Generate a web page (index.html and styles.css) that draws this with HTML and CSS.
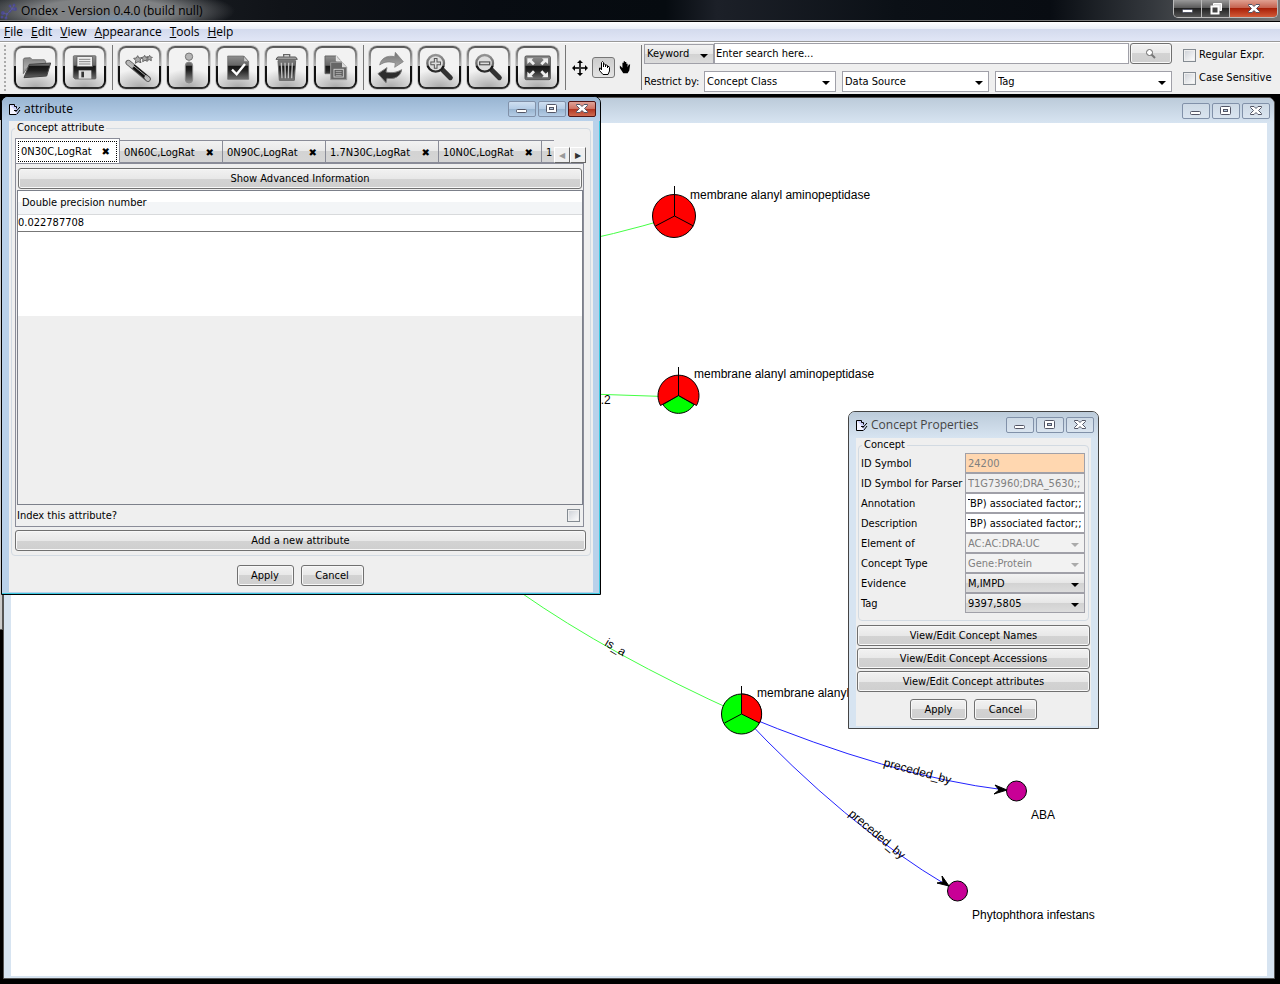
FILE: index.html
```html
<!DOCTYPE html>
<html lang="en">
<head>
<meta charset="utf-8">
<title>Ondex - Version 0.4.0 (build null)</title>
<link rel="stylesheet" href="styles.css">
</head>
<body>
<svg class="defs" aria-hidden="true">
  <defs>
    <linearGradient id="metal" gradientUnits="userSpaceOnUse" x1="0" y1="25" x2="0" y2="110">
      <stop offset="0" stop-color="#9a9a9a"/><stop offset=".42" stop-color="#666"/>
      <stop offset=".46" stop-color="#161616"/><stop offset=".6" stop-color="#222"/><stop offset="1" stop-color="#888"/>
    </linearGradient>
    <linearGradient id="pale" gradientUnits="userSpaceOnUse" x1="0" y1="25" x2="0" y2="110">
      <stop offset="0" stop-color="#777"/><stop offset=".5" stop-color="#aaa"/><stop offset="1" stop-color="#666"/>
    </linearGradient>
    <symbol id="min" viewBox="0 0 14 12"><rect x="1.5" y="6.5" width="10" height="3" rx="1" fill="#fff" stroke="#535666"/></symbol>
    <symbol id="max" viewBox="0 0 14 12"><rect x="1.5" y="1.5" width="10" height="8" rx="1" fill="#fff" stroke="#535666"/><rect x="4.500" y="4.500" width="4" height="2" fill="#b8cce0" stroke="#535666"/></symbol>
    <symbol id="cross" viewBox="0 0 14 12"><path d="M1.500 1.500h3.500l2 2 2-2h3.500v1l-3 3 3 3v1h-3.500l-2-2-2 2h-3.500v-1l3-3-3-3z" fill="#fff" stroke="#535666"/></symbol>
    <symbol id="page" viewBox="0 0 14 14"><path d="M1.500 2.500h5l3 2v8h-8z" fill="#cdd0fa"/><path d="M2 3l6 6v3H2z" fill="#f4f4ff"/><path d="M8.500 12.500h-7v-10h5v2h2v2" fill="none" stroke="#000"/><path d="M6 8.500h3M7.500 10l4.500-5M9 12l3-4" stroke="#000" fill="none"/></symbol>
  </defs>
</svg>

<header class="titlebar">
  <svg class="logo" viewBox="0 0 18 20"><g fill="#4b4a90"><circle cx="3" cy="12" r="2"/><circle cx="6" cy="17" r="1.500"/><circle cx="2" cy="16" r="1.500"/><circle cx="7" cy="13" r="1.500"/><circle cx="10" cy="10" r="1.500"/><circle cx="10" cy="5" r="1.500"/><circle cx="14" cy="4" r="1.500"/><circle cx="15" cy="8" r="2"/><circle cx="12" cy="8" r="1.500"/></g><path d="M3 12l4 1 5-5 2-4M6 17l1-4M10 5l2 3h3" stroke="#6664a8" stroke-opacity=".5" fill="none"/></svg>
  <h1>Ondex - Version 0.4.0 (build null)</h1>
  <div class="app-controls">
    <button aria-label="Minimize"><svg class="ctl"><use href="#min"/></svg></button>
    <button aria-label="Restore"><svg class="ctl" viewBox="0 0 14 12"><path d="M4.500 2.500v-2h8v7h-2" fill="#ddd" stroke="#fff"/><rect x="2.500" y="3.500" width="7" height="7" fill="#444" stroke="#fff" stroke-width="2"/></svg></button>
    <button class="close" aria-label="Close"><svg class="ctl"><use href="#cross"/></svg></button>
  </div>
</header>

<nav class="menubar">
  <button><u>F</u>ile</button><button><u>E</u>dit</button><button><u>V</u>iew</button><button><u>A</u>ppearance</button><button><u>T</u>ools</button><button><u>H</u>elp</button>
</nav>

<section class="toolbar">
  <span class="grip"></span>
  <div class="tools">
    <button class="tool" aria-label="Open"><svg viewBox="9 9 117 117"><path d="M31 86V43l3-4 18-1 6 6h36l4 5v10H50z" fill="url(#pale)" stroke="#555" stroke-width="2"/><path d="M49 58l64-4-12 39-68 5z" fill="url(#metal)" stroke="#444" stroke-width="3"/></svg></button>
    <button class="tool" aria-label="Save"><svg viewBox="9 9 117 117"><path d="M34 35q0-3 3-3h62q3 0 3 3v64q0 3-3 3H39l-5-5z" fill="url(#metal)" stroke="#555" stroke-width="2"/><rect x="45" y="35" width="46" height="30" fill="#eee" stroke="#555" stroke-width="2"/><path d="M51 43h34M51 50h34M51 57h34" stroke="#888" stroke-width="3"/><path d="M50 76h38v25H50z" fill="#ddd"/><path d="M58 80h8v17h-8z" fill="#333"/></svg></button>
    <span class="sep"></span>
    <button class="tool" aria-label="Wizard"><svg viewBox="9 9 117 117"><path d="M34 53l59 49" stroke="#555" stroke-width="17" stroke-linecap="round"/><path d="M53 67l39 33" stroke="#111" stroke-width="13" stroke-linecap="round"/><path d="M34 53l11 9M88 97l5 5" stroke="#bbb" stroke-width="12" stroke-linecap="round"/><path d="M36 51l57 47" stroke="#aaa" stroke-width="3"/><path d="M62 32l4 7 9-1-6 7 3 8-9-3-8 5 1-9-6-6 8-1zM83 31l3 6 8-1-5 6 2 7-7-3-7 4 1-8-6-4 8-2zM98 31l2 5 6 1-4 4 1 6-6-3-5 2 1-6-4-4 6-1z" fill="#aaa" stroke="#666" stroke-width="3"/></svg></button>
    <button class="tool" aria-label="Information"><svg viewBox="9 9 117 117"><circle cx="69" cy="35" r="11" fill="#b5b5b5" stroke="#777" stroke-width="3"/><rect x="58" y="51" width="22" height="63" rx="11" fill="url(#metal)" stroke="#888" stroke-width="3"/></svg></button>
    <button class="tool" aria-label="Validate"><svg viewBox="9 9 117 117"><path d="M38 33h48l15 17v53H38z" fill="url(#metal)" stroke="#666" stroke-width="2"/><path d="M86 33v17h15z" fill="#ccc" stroke="#666" stroke-width="2"/><path d="M51 74l14 14 25-31" fill="none" stroke="#fff" stroke-width="7"/></svg></button>
    <button class="tool" aria-label="Delete"><svg viewBox="9 9 117 117"><path d="M59 35v-6h18v6" fill="none" stroke="#666" stroke-width="4"/><path d="M36 43l5-7h54l5 7z" fill="#aaa" stroke="#555" stroke-width="3"/><path d="M42 47h53l-4 59H46z" fill="url(#metal)" stroke="#666" stroke-width="3"/><path d="M52 53l2 47M63 53l1 47M74 53l-1 47M85 53l-2 47" stroke="#c4c4c4" stroke-width="4"/></svg></button>
    <button class="tool" aria-label="Copy"><svg viewBox="9 9 117 117"><path d="M36 33h34l14 15v38H36z" fill="url(#metal)" stroke="#666" stroke-width="3"/><path d="M70 33v15h14" fill="#ddd" stroke="#eee" stroke-width="3"/><path d="M53 52h34l14 15v37H53z" fill="#666" stroke="#999" stroke-width="3"/><path d="M87 52v15h14z" fill="#ddd"/><rect x="63" y="73" width="28" height="23" fill="#555" stroke="#ccc" stroke-width="3"/><path d="M68 79h18M68 85h18M68 91h18" stroke="#ddd" stroke-width="2"/></svg></button>
    <span class="sep"></span>
    <button class="tool" aria-label="Refresh"><svg viewBox="9 9 117 117"><path d="M35 60C39 39 58 30 80 35l2-13 24 28-26 17 2-13C64 49 51 49 35 60z" fill="url(#pale)" stroke="#777" stroke-width="2"/><path d="M101 74C97 96 79 103 57 100l-3 13-24-27 27-18-3 13c17 4 32 2 47-7z" fill="#2c2c2c" stroke="#777" stroke-width="3"/></svg></button>
    <button class="tool" aria-label="Zoom in"><svg viewBox="9 9 117 117"><path d="M74 72l26 26" stroke="#333" stroke-width="15" stroke-linecap="round"/><circle cx="56" cy="55" r="25" fill="#ddd" stroke="url(#metal)" stroke-width="7"/><path d="M56 39v32M40 55h32" stroke="#555" stroke-width="11"/><path d="M56 42v26M43 55h26" stroke="#ddd" stroke-width="5"/></svg></button>
    <button class="tool" aria-label="Zoom out"><svg viewBox="9 9 117 117"><path d="M74 72l26 26" stroke="#333" stroke-width="15" stroke-linecap="round"/><circle cx="56" cy="55" r="25" fill="#ddd" stroke="url(#metal)" stroke-width="7"/><path d="M39 55h34" stroke="#555" stroke-width="12"/><path d="M43 55h26" stroke="#ddd" stroke-width="5"/></svg></button>
    <button class="tool" aria-label="Fit to window"><svg viewBox="9 9 117 117"><rect x="30" y="33" width="76" height="71" rx="4" fill="url(#metal)" stroke="#555" stroke-width="3"/><g fill="#eee"><path d="M37 40h18l-5 5 10 10-6 6-10-10-7 6z"/><path d="M99 40H81l5 5-10 10 6 6 10-10 7 6z"/><path d="M37 97h18l-5-5 10-10-6-6-10 10-7-6z"/><path d="M99 97H81l5-5-10-10 6-6 10 10 7-6z"/></g></svg></button>
    <span class="sep"></span>
  </div>
  <div class="modes">
    <button aria-label="Move"><svg width="16" height="16" viewBox="0 0 16 16"><path d="M8 2v12M2 8h12" stroke="#333" stroke-width="2"/><path d="M8 0l3 3H5zM8 16l3-3H5zM0 8l3-3v6zM16 8l-3-3v6z"/></svg></button>
    <button class="pressed" aria-label="Pick"><svg width="16" height="16" viewBox="0 0 16 16"><path d="M5.500 10V2.500q1-2 2 0V7 4.500q1.500-1 2 0V7 5.500q1.500-1 2 0V8 6.500q2-.500 2 1V11l-1.500 3.500h-5L3.500 10.500V8q1-1 2 2z" fill="#fff" stroke="#000"/></svg></button>
    <button aria-label="Grab"><svg width="12" height="14" viewBox="1 1 14 16"><path d="M5 9V3h1.500v3V1H8v5V2h1.500v5V4H11v4l1.500-3H14l-1 7-2 3H6L2 9V6z"/></svg></button>
  </div>
  <span class="sep"></span>
  <form class="search">
    <div class="row">
      <span class="pick raised keyword"><select aria-label="Search type"><option>Keyword</option></select></span>
      <input class="query" type="text" aria-label="Search" value="Enter search here...">
      <button type="button" class="btn find" aria-label="Find"><svg width="12" height="12" viewBox="0 0 12 12"><path d="M6 6l4 4" stroke="#777" stroke-width="2"/><circle cx="4.500" cy="4.500" r="3" fill="#fff" stroke="#666"/></svg></button>
    </div>
    <div class="row lower">
      <label for="cls">Restrict by:</label>
      <span class="pick cls"><select id="cls"><option>Concept Class</option></select></span>
      <span class="pick source"><select aria-label="Data source"><option>Data Source</option></select></span>
      <span class="pick tag"><select aria-label="Tag"><option>Tag</option></select></span>
    </div>
  </form>
  <div class="options">
    <label><input type="checkbox">Regular Expr.</label>
    <label><input type="checkbox">Case Sensitive</label>
  </div>
</section>

<main class="desktop">
  <div class="edge-panel"></div>
  <section class="window graph" aria-label="Graph">
    <div class="caption">
      <div class="controls"><button aria-label="Minimize"><svg class="ctl"><use href="#min"/></svg></button><button aria-label="Maximize"><svg class="ctl"><use href="#max"/></svg></button><button aria-label="Close"><svg class="ctl"><use href="#cross"/></svg></button></div>
    </div>
    <svg class="canvas">
      <g transform="translate(-11 -123)">
        <g fill="none" stroke="#4f4"><path d="M560 245Q610 236 674 217"/><path d="M560 393L679 397"/><path d="M520 592Q610 655 741 714"/></g>
        <g fill="none" stroke="#22f"><path d="M741 714Q890 776 1005 790"/><path d="M741 714Q845 825 948 886"/></g>
        <path d="M1007 790l-12-5 4 5-5 4zM949 886l-7-10 1 6-6 1z" stroke="#000"/>
        <g stroke="#000">
          <circle cx="674" cy="216" r="21.500" fill="red"/><path d="M674.500 186v30l-19 10M674.500 216l19 10" fill="none"/>
          <path d="M663 404.500a18 18 0 0 0 31 0L678.500 395.500z" fill="lime"/><path d="M678.500 395.500L660.500 405.500A20.500 20.500 0 1 1 696.500 405.500z" fill="red"/><path d="M678.500 367v29" fill="none"/>
          <circle cx="741.500" cy="714" r="20" fill="lime"/><path d="M741.500 714V694A20 20 0 0 1 759.500 723z" fill="red"/><path d="M741.500 686v28l-17 9" fill="none"/>
          <circle cx="1016.500" cy="791" r="10" fill="#c80096"/><circle cx="957.500" cy="891" r="10" fill="#c80096"/>
        </g>
        <g class="node-text">
          <text x="690" y="199">membrane alanyl aminopeptidase</text>
          <text x="694" y="378">membrane alanyl aminopeptidase</text>
          <text x="757" y="697">membrane alanyl aminopeptidase</text>
          <text x="1031" y="819">ABA</text>
          <text x="972" y="919">Phytophthora infestans</text>
          <text x="594" y="404">0.2</text>
          <text transform="translate(604 645) rotate(31)">is_a</text>
          <text transform="translate(883 766) rotate(15)">preceded_by</text>
          <text transform="translate(848 815) rotate(40)">preceded_by</text>
        </g>
      </g>
    </svg>
  </section>

  <section class="window attribute active">
    <div class="caption"><svg class="ico"><use href="#page"/></svg><h2>attribute</h2>
      <div class="controls"><button aria-label="Minimize"><svg class="ctl"><use href="#min"/></svg></button><button aria-label="Maximize"><svg class="ctl"><use href="#max"/></svg></button><button class="close" aria-label="Close"><svg class="ctl"><use href="#cross"/></svg></button></div>
    </div>
    <div class="body">
      <fieldset>
        <legend>Concept attribute</legend>
        <div class="tabs">
          <div class="strip">
            <button class="tab current"><span>0N30C,LogRat<b>✖</b></span></button>
            <button class="tab">0N60C,LogRat<b>✖</b></button>
            <button class="tab">0N90C,LogRat<b>✖</b></button>
            <button class="tab wide">1.7N30C,LogRat<b>✖</b></button>
            <button class="tab">10N0C,LogRat<b>✖</b></button>
            <button class="tab partial">1</button>
          </div>
          <button class="scroll" aria-label="Previous tab" disabled>◀</button><button class="scroll" aria-label="Next tab">▶</button>
        </div>
        <div class="panel">
          <button class="btn">Show Advanced Information</button>
          <div class="sheet">
            <table><thead><tr><th>Double precision number</th></tr></thead><tbody><tr><td>0.022787708</td></tr></tbody></table>
            <div class="blank"></div>
          </div>
          <label class="index">Index this attribute?<input type="checkbox"></label>
        </div>
        <button class="btn">Add a new attribute</button>
      </fieldset>
      <div class="actions"><button class="btn">Apply</button><button class="btn">Cancel</button></div>
    </div>
  </section>

  <section class="window properties">
    <div class="caption"><svg class="ico"><use href="#page"/></svg><h2>Concept Properties</h2>
      <div class="controls"><button aria-label="Minimize"><svg class="ctl"><use href="#min"/></svg></button><button aria-label="Maximize"><svg class="ctl"><use href="#max"/></svg></button><button aria-label="Close"><svg class="ctl"><use href="#cross"/></svg></button></div>
    </div>
    <div class="body">
      <fieldset>
        <legend>Concept</legend>
        <div class="form">
          <label for="f1">ID Symbol</label><input id="f1" class="peach" type="text" value="24200" disabled>
          <label for="f2">ID Symbol for Parser</label><input id="f2" type="text" value="T1G73960;DRA_5630;;" disabled>
          <label for="f3">Annotation</label><input id="f3" class="scrolled" type="text" value="TBP) associated factor;;">
          <label for="f4">Description</label><input id="f4" class="scrolled" type="text" value="TBP) associated factor;;">
          <label for="f5">Element of</label><span class="pick off"><select id="f5" disabled><option>AC:AC:DRA:UC</option></select></span>
          <label for="f6">Concept Type</label><span class="pick off"><select id="f6" disabled><option>Gene:Protein</option></select></span>
          <label for="f7">Evidence</label><span class="pick raised"><select id="f7"><option>M,IMPD</option></select></span>
          <label for="f8">Tag</label><span class="pick raised"><select id="f8"><option>9397,5805</option></select></span>
        </div>
      </fieldset>
      <div class="links"><button class="btn">View/Edit Concept Names</button><button class="btn">View/Edit Concept Accessions</button><button class="btn">View/Edit Concept attributes</button></div>
      <div class="actions"><button class="btn">Apply</button><button class="btn">Cancel</button></div>
    </div>
  </section>
</main>
</body>
</html>
```

FILE: styles.css
```css
* { box-sizing: border-box; }
body {
  margin: 0; min-height: 100vh; display: flex; flex-direction: column;
  background: #000; color: #000; font: 11px/14px "DejaVu Sans Condensed", "Noto Sans", sans-serif;
}
button, input, select { font: inherit; color: inherit; margin: 0; padding: 0; border-radius: 0; }
button { border: 0; background: none; }
h1, h2 { margin: 0; font-weight: normal; font-size: 12px; line-height: 16px; font-family: "Open Sans", sans-serif; white-space: nowrap; }
.defs { position: absolute; width: 0; height: 0; }
.ctl { width: 14px; height: 12px; display: block; }

.titlebar {
  display: flex; align-items: center; height: 22px; padding-right: 2px; overflow: hidden;
  border-bottom: 1px solid #000; box-shadow: inset 0 -1px #777;
  background:
    radial-gradient(ellipse 50px 10px at 115px 21px, #7891ab, transparent),
    radial-gradient(ellipse 130px 24px at 105px 11px, #808284 50%, #80828400 100%),
    linear-gradient(90deg, #25292d, #101318 22%, #080c12 38%, #060b10 52%, #1c2028 56%, #0b1016 70%, #080c12 82%, #34383d 90%, #777 100%);
}
.logo { width: 18px; height: 20px; margin-right: 3px; }
.app-controls { display: flex; align-self: flex-start; margin-left: auto; border: 1px solid #bbb; border-top: 0; border-radius: 0 0 5px 5px; overflow: hidden; }
.app-controls button { display: grid; place-items: center; width: 28px; height: 17px; background: linear-gradient(#999, #555 50%, #222 50%, #555); border-right: 1px solid #bbb; }
.app-controls .close { width: 47px; border: 0; background: linear-gradient(#e0a091, #c35c48 50%, #a82008 50%, #d25a38); }

.menubar {
  display: flex; gap: 8px; height: 20px; padding: 0 4px; align-items: center; border-bottom: 1px solid #999;
  background: linear-gradient(#fff, #eceff8 35%, #d3daed 36%, #e1e6f6);
  font: 12px/16px "Open Sans", sans-serif;
}

.toolbar { display: flex; align-items: center; height: 52px; padding-bottom: 2px; background: #efefef; border-top: 1px solid #fff; }
.grip { align-self: stretch; width: 2px; margin: 2px 7px 0 4px; background: repeating-linear-gradient(#aaa 0 2px, transparent 2px 4px); }
.tools { display: flex; gap: 4px; align-items: center; }
.tool {
  width: 43px; height: 43px; margin: 1px; border: 2px solid transparent; border-radius: 8px; box-shadow: 0 0 0 1px #ccc;
  background:
    radial-gradient(ellipse 32px 18px at 50% 100%, #aaa, #eee0) padding-box,
    linear-gradient(#f2f2f2, #f2f2f2) padding-box,
    linear-gradient(#555, #777 12%, #b4b4b4 46%, #111 47%, #111 85%, #333) border-box;
}
.tool svg { display: block; width: 39px; height: 39px; }
.sep { width: 1px; height: 45px; margin-left: 1px; background: #777; }
.modes { display: flex; gap: 3px; align-items: center; width: 74px; padding-left: 5px; }
.modes button { display: grid; place-items: center; padding: 1px; }
.modes .pressed { width: 23px; height: 21px; border: 1px solid #777; border-radius: 3px; background: linear-gradient(#ccc, #e4e4e4); }
.search { flex: 1; min-width: 0; margin-left: 2px; display: flex; flex-direction: column; gap: 7px; }
.row { display: flex; align-items: center; }
.row .query { flex: 1; min-width: 0; height: 21px; margin-right: 1px; }
.lower > .pick { height: 21px; }
.lower label { width: 60px; white-space: nowrap; }
input[type=text] { border: 1px solid #a0a0a8; background: #fff; padding: 0 1px; outline: 0; }
.pick { position: relative; display: block; height: 20px; background: #fff; border: 1px solid #a0a0a8; }
.pick select { appearance: none; display: block; width: 100%; height: 100%; border: 0; background: none; padding: 1px 14px 0 2px; outline: 0; opacity: 1; }
.pick::after { content: ""; position: absolute; right: 5px; top: 9px; border: 4px solid transparent; border-top-color: #000; border-bottom: 0; pointer-events: none; }
.raised { background: linear-gradient(#f2f2f2, #e6e6e6 50%, #d2d2d2 50%, #dcdcdc); }
.keyword { width: 70px; }
.cls { width: 132px; margin-right: 6px; }
.source { width: 147px; margin-right: 6px; }
.tag { flex: 1; }
.find { width: 42px; }
.options { display: flex; flex-direction: column; gap: 9px; width: 97px; margin-left: 11px; padding-bottom: 2px; }
.options label { display: flex; align-items: center; gap: 3px; white-space: nowrap; }
input[type=checkbox] { appearance: none; flex: none; width: 13px; height: 13px; border: 1px solid #848b92; background: linear-gradient(135deg, #ccd0d6, #fff); box-shadow: inset 0 0 0 1px #efefef; }
.btn {
  display: grid; place-items: center; height: 21px; border: 1px solid #707070; border-radius: 3px;
  background: linear-gradient(#f2f2f2, #e8e8e8 50%, #d3d3d3 50%, #cfcfcf); box-shadow: inset 0 0 0 1px #f8f8f8;
}

/* MDI windows */
.desktop { position: relative; flex: 1; overflow: hidden; }
.edge-panel { position: absolute; left: 0; top: 26px; width: 3px; height: 510px; background: #ccc; border-right: 1px solid #555; border-bottom: 1px solid #555; }
.window { position: absolute; display: flex; flex-direction: column; border: 1px solid #444; border-radius: 7px 7px 0 0; background: #d7e4f1; padding: 0 7px 2px; }
.caption { display: flex; align-items: center; height: 25px; margin: 0 -7px; padding: 0 4px 0 6px; border-radius: 6px 6px 0 0; background: linear-gradient(#bccbda, #d7e4f1); color: #444; }
.ico { width: 14px; height: 14px; margin-right: 2px; }
.controls { display: flex; gap: 2px; margin-left: auto; }
.controls button { display: grid; place-items: center; width: 28px; height: 16px; border: 1px solid #8191a9; border-radius: 2px; background: #ffffff30; }
.graph { left: 3px; right: 5px; top: 3px; bottom: 5px; border-color: #555; }
.canvas { flex: 1; width: 100%; min-height: 0; background: #fff; }
.node-text { font: 12px "Liberation Sans", sans-serif; }
.active { background: #b9d1ea; border-color: #000; box-shadow: inset -1px -1px #3cc8e0; }
.active .caption { background: linear-gradient(#98b4d1, #b9d1ea); color: #000; }
.active .controls button { background: linear-gradient(#cfdff0, #b4cce6 50%, #98b4d0 50%, #b5cde6); }
.active .controls .close { border-color: #521414; background: linear-gradient(#e0a398, #cf7060 50%, #b13420 50%, #cf6a50); }
.body { flex: 1; display: flex; flex-direction: column; background: #efefef; }
fieldset { margin: 0; min-width: 0; border: 1px solid #d2dae2; border-radius: 4px; }
legend { padding: 0 2px; }
.actions { display: flex; justify-content: center; gap: 7px; }
.actions .btn { width: 57px; }
.actions .btn + .btn { width: 63px; }

.attribute { left: 1px; top: 2px; width: 600px; height: 499px; }
.attribute .caption { height: 24px; }
.attribute fieldset { margin: 0 2px; padding: 3px 4px 4px 3px; flex: 1; display: flex; flex-direction: column; gap: 3px; }
.tabs { display: flex; align-items: flex-end; margin-bottom: -3px; }
.strip { display: flex; flex: 1; min-width: 0; overflow: hidden; align-items: flex-end; }
.tab { flex: none; display: flex; align-items: center; justify-content: space-between; width: 103px; height: 23px; padding: 2px 8px 0 4px; border: 1px solid #8a8c98; border-left: 0; white-space: nowrap; background: linear-gradient(#f2f2f2, #e8e8e8 50%, #d3d3d3 50%, #d5d5d5); }
.tab b { font: 10px/12px "DejaVu Sans", sans-serif; }
.tab.wide { width: 113px; }
.tab.partial { width: 12px; border-right-style: dashed; }
.tab.current { width: 105px; height: 25px; border-left: 1px solid #8a8c98; border-bottom: 0; background: #fff; padding: 2px 2px 1px; }
.tab.current span { display: flex; align-items: center; justify-content: space-between; width: 100%; height: 100%; padding: 0 6px 0 2px; border: 1px dotted #000; }
.scroll { width: 16px; height: 16px; font: 8px "DejaVu Sans", sans-serif; border: 1px solid #fff; border-right-color: #666; border-bottom-color: #666; color: #333; background: #efefef; }
.scroll:disabled { color: #999; }
.panel { flex: 1; display: flex; flex-direction: column; margin-right: 2px; padding: 4px 0 0 1px; border: 1px solid #8a8c98; }
.panel > .btn { margin: 0 1px; }
.sheet { flex: 1; display: flex; flex-direction: column; border: 1px solid #7c808a; margin-top: 1px; }
table { width: 100%; border-collapse: collapse; }
th { height: 23px; padding: 2px 4px 0; text-align: left; font-weight: normal; background: linear-gradient(#fff 50%, #f3f5f7 50%); border-bottom: 1px solid #d8dadc; }
td { height: 17px; padding: 0; background: #fff; border-bottom: 1px solid #777; }
.blank { height: 84px; background: #fff; }
.index { display: flex; align-items: center; justify-content: space-between; height: 21px; padding-right: 3px; }
.attribute .actions { padding: 9px 2px 6px 0; }

.properties { left: 848px; top: 317px; width: 251px; height: 318px; }
.properties .caption { height: 26px; }
.properties fieldset { margin: 0 2px; padding: 1px 3px 7px 2px; }
.properties legend { margin-left: 1px; }
.form { display: grid; grid-template-columns: 104px 1fr; grid-auto-rows: 20px; align-items: center; }
.form label { padding-top: 1px; white-space: nowrap; }
.form input { width: 100%; min-width: 0; height: 20px; padding: 0 2px; }
.form input:disabled { color: #808080; background: #efefef; }
.form .peach:disabled { background: #ffd7b0; }
.form .scrolled { text-indent: -4px; }
.off { background: #f2f2f2; color: #808080; }
.off::after { border-top-color: #aaa; }
.links { display: flex; flex-direction: column; gap: 2px; margin: 4px 1px 7px; }
```
